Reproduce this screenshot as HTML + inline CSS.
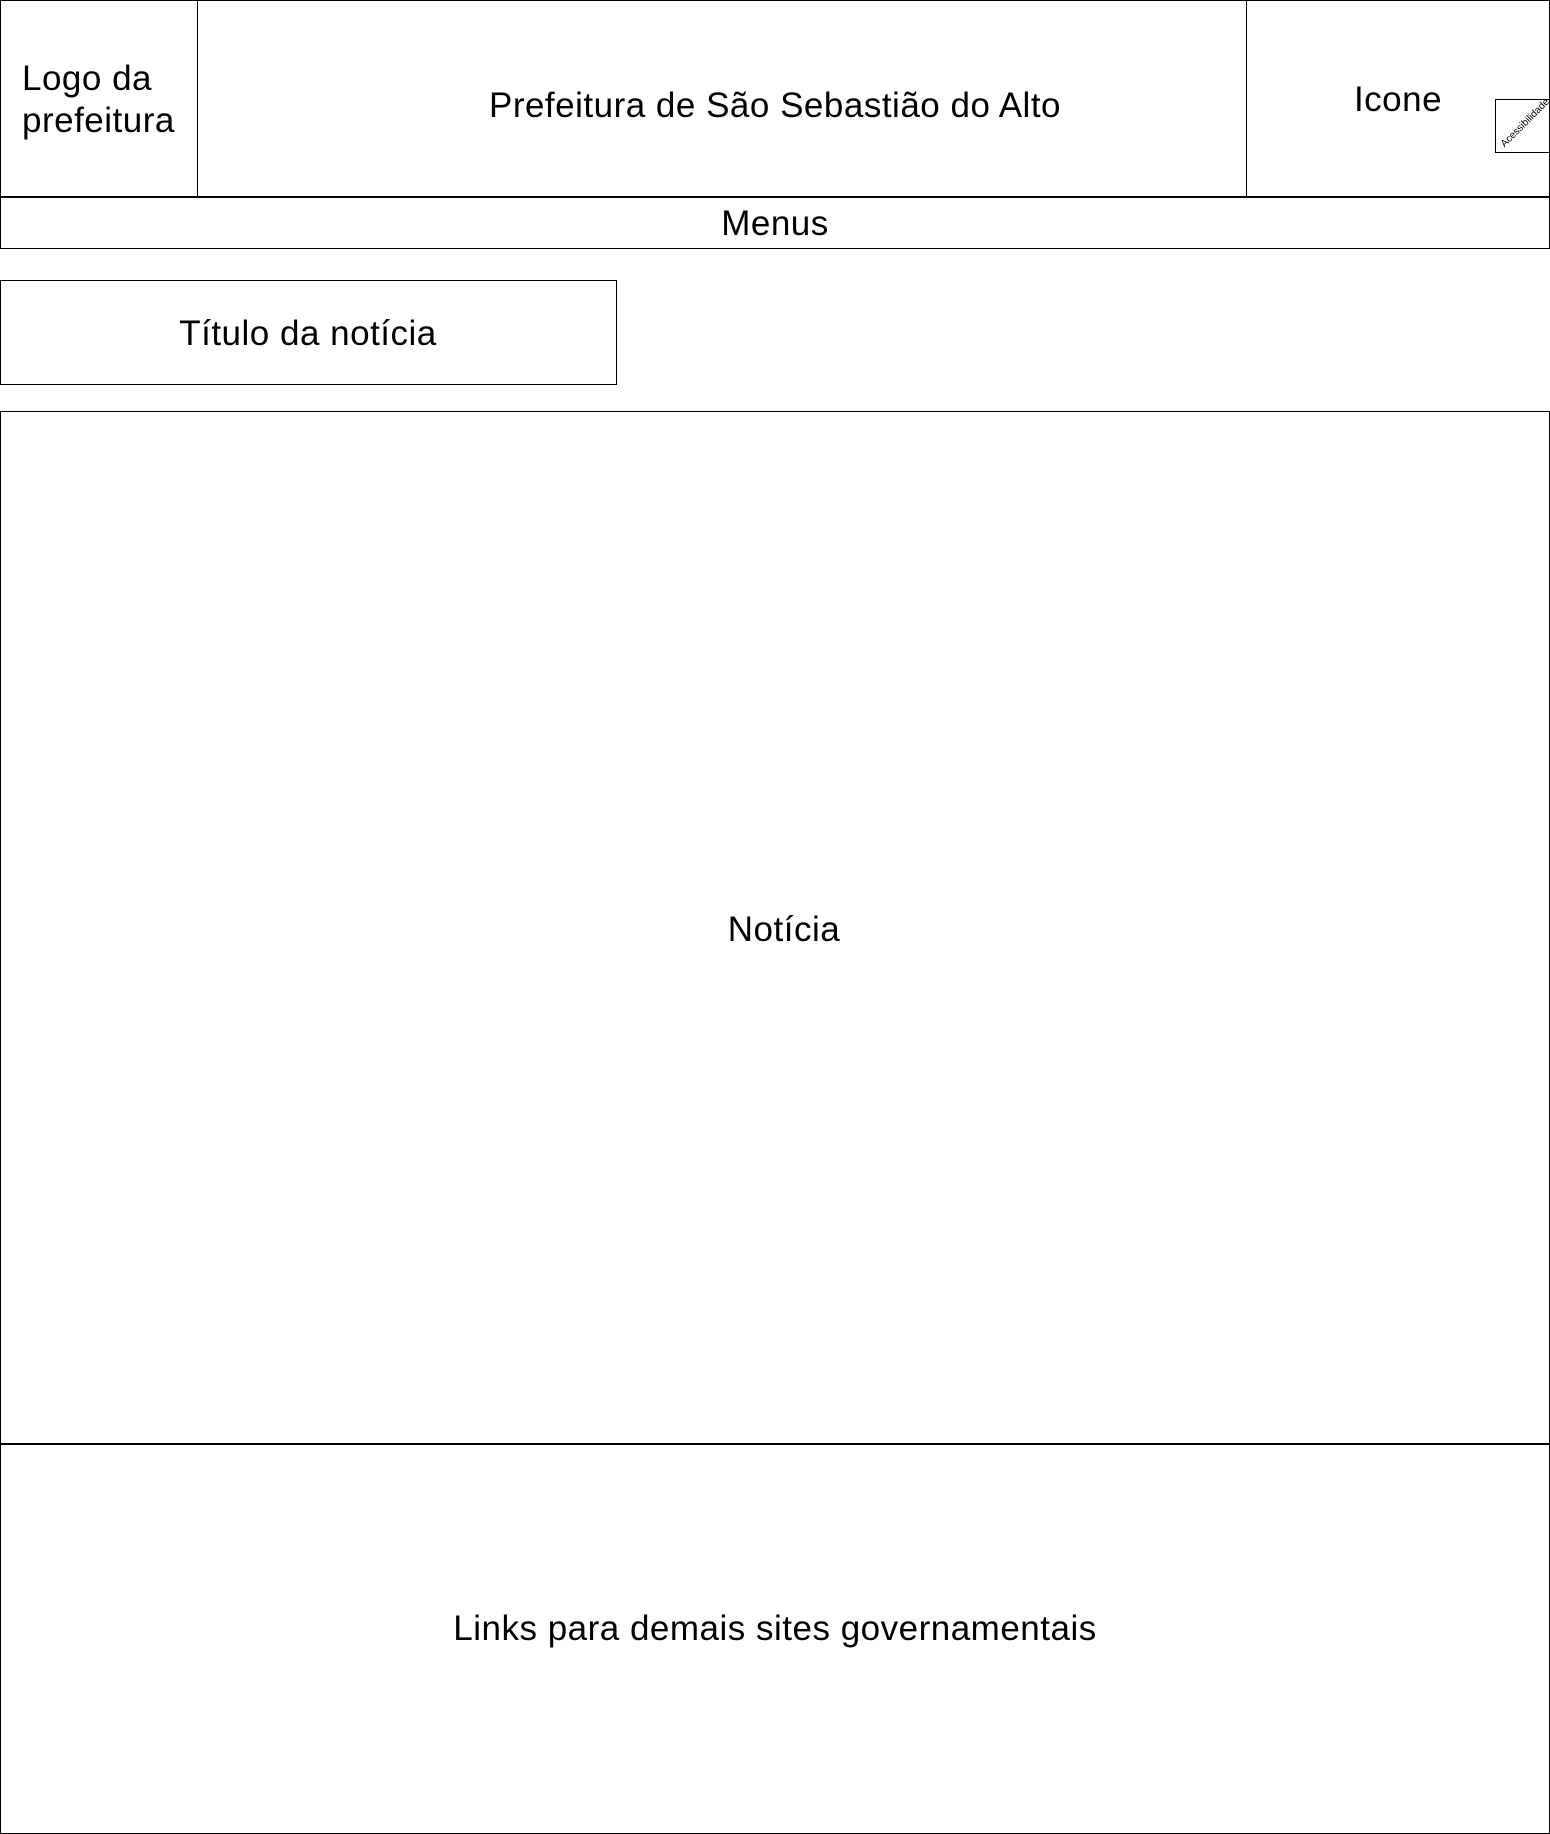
<!DOCTYPE html>
<html><head><meta charset="utf-8"><style>
body{margin:0;width:1550px;height:1834px;background:#fff;position:relative;font-family:"Liberation Sans",sans-serif;color:#000;overflow:hidden}
.b{position:absolute;border:1px solid #000;box-sizing:border-box}
.t{position:absolute;font-size:35px;white-space:nowrap;transform:translate(-50%,-50%);letter-spacing:0.5px}
</style></head><body>
<div class="b" style="left:0;top:0;width:1550px;height:198px"></div>
<div class="b" style="left:197px;top:0;width:1px;height:198px;border-width:0 0 0 1px"></div>
<div class="b" style="left:1246px;top:0;width:1px;height:198px;border-width:0 0 0 1px"></div>
<div class="b" style="left:0;top:196px;width:1550px;height:53px;border-top-width:2px"></div>
<div class="b" style="left:1495px;top:99px;width:55px;height:54px"></div>
<div style="position:absolute;left:1494px;top:119px;width:60px;font-size:10px;transform:rotate(-45deg);text-align:center">Acessibilidade</div>
<div style="position:absolute;left:22px;top:58px;font-size:35px;line-height:42px;letter-spacing:0.5px">Logo da<br>prefeitura</div>
<div class="t" style="left:775px;top:106px">Prefeitura de São Sebastião do Alto</div>
<div class="t" style="left:1398px;top:100px">Icone</div>
<div class="t" style="left:775px;top:224px">Menus</div>
<div class="b" style="left:0;top:280px;width:617px;height:105px"></div>
<div class="t" style="left:308px;top:334px">Título da notícia</div>
<div class="b" style="left:0;top:411px;width:1550px;height:1034px"></div>
<div class="t" style="left:784px;top:930px">Notícia</div>
<div class="b" style="left:0;top:1443px;width:1550px;height:391px;border-top-width:2px"></div>
<div class="t" style="left:775px;top:1629px">Links para demais sites governamentais</div>
</body></html>
